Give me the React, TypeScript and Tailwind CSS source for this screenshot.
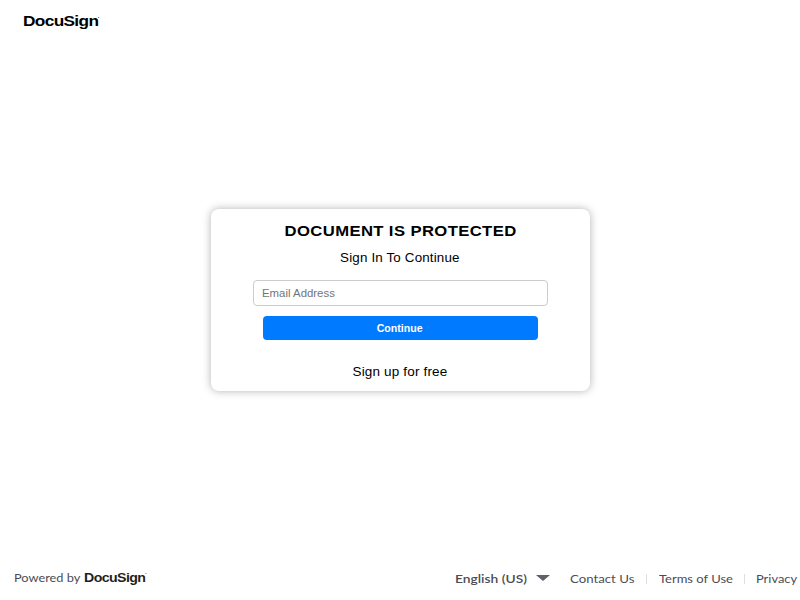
import type { ReactNode } from "react";

function Wordmark({ className }: { className: string }) {
  return (
    <span className={`flex origin-left items-start whitespace-nowrap font-['Liberation_Sans',Arial,sans-serif] font-bold ${className}`}>
      DocuSign
      <i className="mt-[0.38em] size-px bg-current opacity-50" />
    </span>
  );
}

function FooterLink({ width, scale, children }: { width: string; scale: string; children: ReactNode }) {
  return (
    <a href="#" className={`block whitespace-nowrap ${width}`}>
      <span className={`inline-block origin-left ${scale}`}>{children}</span>
    </a>
  );
}

export default function App() {
  return (
    <div className="flex h-[600px] w-[800px] flex-col overflow-hidden bg-white font-['Liberation_Sans',Arial,sans-serif] text-black">
      <header className="h-[209px] pl-[23px] pt-[11px]">
        <Wordmark className="scale-x-[1.19] text-[14.5px] leading-[20px] tracking-[-0.55px]" />
      </header>

      <main className="mx-auto flex h-[182px] w-[379px] flex-col items-center rounded-[8px] bg-white pt-[12px] shadow-[0_0_8px_rgba(0,0,0,0.3)]">
        <h1 className="scale-x-[1.11] whitespace-nowrap pl-px text-[15px] font-bold leading-[20px] tracking-[0.35px]">
          DOCUMENT IS PROTECTED
        </h1>
        <p className="mt-[8px] scale-x-[1.07] text-[12.5px] leading-[18px] tracking-[0.15px]">Sign In To Continue</p>
        <div className="mt-[13px] flex h-[26px] w-[295px] items-center rounded-[4px] border border-[#ccc] pl-[8px]">
          <input
            type="email"
            placeholder="Email Address"
            className="w-[244px] origin-left scale-x-[1.14] bg-transparent text-[10px] outline-none placeholder:text-[#757575]"
          />
        </div>
        <button className="mt-[10px] h-[24px] w-[275px] rounded-[4px] bg-[#007bff] text-[10px] font-bold text-white">
          <span className="inline-block scale-x-[1.06]">Continue</span>
        </button>
        <a href="#" className="mt-[23px] scale-x-[1.08] text-[12.5px] leading-[18px] tracking-[0.15px]">
          Sign up for free
        </a>
      </main>

      <footer className="mt-auto flex h-[44px] items-start justify-between pl-[14px] pr-[3px] pt-[11px] font-[Lato,sans-serif] text-[11.5px] leading-[20px] text-[#4c4c55]">
        <div className="flex pt-px">
          <span className="w-[70px] whitespace-nowrap">
            <span className="inline-block origin-left scale-x-[1.11]">Powered by</span>
          </span>
          <Wordmark className="scale-x-[1.18] text-[12px] leading-[20px] tracking-[-0.5px] text-[#1f1f22]" />
        </div>
        <nav className="flex items-center pt-[2px]">
          <button className="flex items-center font-semibold">
            <span className="w-[81px] whitespace-nowrap text-left">
              <span className="inline-block origin-left scale-x-[1.2]">English (US)</span>
            </span>
            <svg viewBox="0 0 14 6" className="mb-[2px] h-[6px] w-[14px] fill-[#606068]">
              <path d="M0 0h14L7 6z" />
            </svg>
          </button>
          <span className="w-[20px]" />
          <FooterLink width="w-[76px]" scale="scale-x-[1.15]">Contact Us</FooterLink>
          <i className="mr-[12px] h-[10px] w-px bg-[#dedee2]" />
          <FooterLink width="w-[85px]" scale="scale-x-[1.13]">Terms of Use</FooterLink>
          <i className="mr-[11px] h-[10px] w-px bg-[#dedee2]" />
          <FooterLink width="w-[41px]" scale="scale-x-[1.12]">Privacy</FooterLink>
        </nav>
      </footer>
    </div>
  );
}
